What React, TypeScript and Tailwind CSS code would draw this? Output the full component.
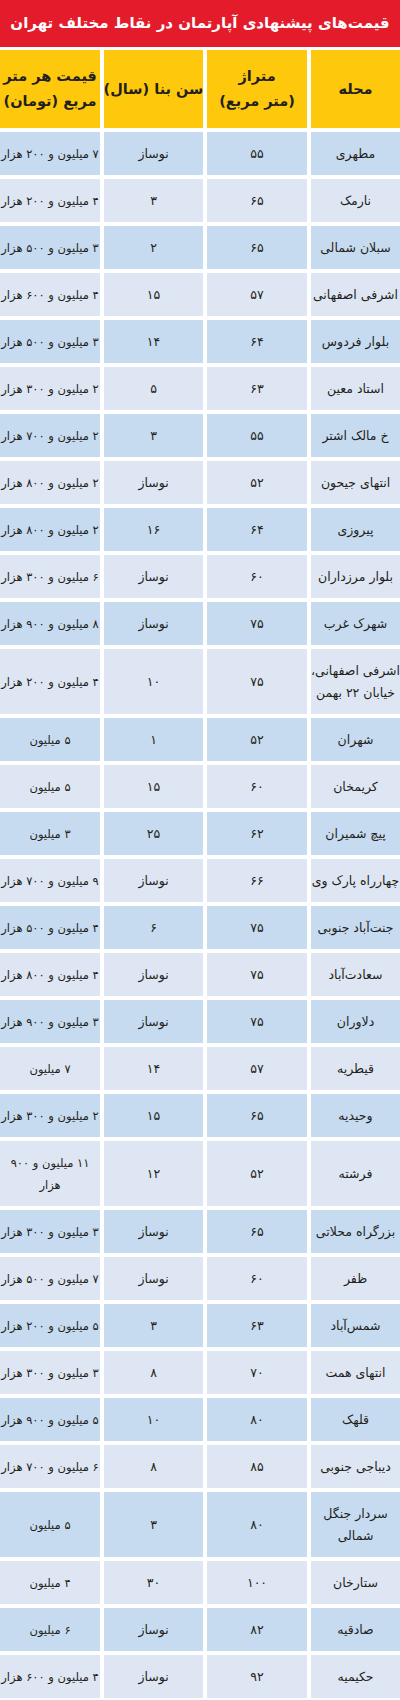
import React from "react";

type Row = {
  name: React.ReactNode;
  area: string;
  age: string;
  price: React.ReactNode;
  tall?: boolean;
};

const rows: Row[] = [
  { name: "مطهری", area: "۵۵", age: "نوساز", price: "۷ میلیون و ۲۰۰ هزار" },
  { name: "نارمک", area: "۶۵", age: "۳", price: "۴ میلیون و ۲۰۰ هزار" },
  { name: "سبلان شمالی", area: "۶۵", age: "۲", price: "۳ میلیون و ۵۰۰ هزار" },
  { name: "اشرفی اصفهانی", area: "۵۷", age: "۱۵", price: "۴ میلیون و ۶۰۰ هزار" },
  { name: "بلوار فردوس", area: "۶۴", age: "۱۴", price: "۳ میلیون و ۵۰۰ هزار" },
  { name: "استاد معین", area: "۶۳", age: "۵", price: "۲ میلیون و ۳۰۰ هزار" },
  { name: "خ مالک اشتر", area: "۵۵", age: "۳", price: "۲ میلیون و ۷۰۰ هزار" },
  { name: "انتهای جیحون", area: "۵۲", age: "نوساز", price: "۲ میلیون و ۸۰۰ هزار" },
  { name: "پیروزی", area: "۶۴", age: "۱۶", price: "۲ میلیون و ۸۰۰ هزار" },
  { name: "بلوار مرزداران", area: "۶۰", age: "نوساز", price: "۶ میلیون و ۳۰۰ هزار" },
  { name: "شهرک غرب", area: "۷۵", age: "نوساز", price: "۸ میلیون و ۹۰۰ هزار" },
  {
    name: (
      <>
        اشرفی اصفهانی،
        <br />
        خیابان ۲۲ بهمن
      </>
    ),
    area: "۷۵",
    age: "۱۰",
    price: "۴ میلیون و ۲۰۰ هزار",
    tall: true,
  },
  { name: "شهران", area: "۵۲", age: "۱", price: "۵ میلیون" },
  { name: "کریمخان", area: "۶۰", age: "۱۵", price: "۵ میلیون" },
  { name: "پیچ شمیران", area: "۶۲", age: "۲۵", price: "۳ میلیون" },
  { name: "چهارراه پارک وی", area: "۶۶", age: "نوساز", price: "۹ میلیون و ۷۰۰ هزار" },
  { name: "جنت‌آباد جنوبی", area: "۷۵", age: "۶", price: "۴ میلیون و ۵۰۰ هزار" },
  { name: "سعادت‌آباد", area: "۷۵", age: "نوساز", price: "۴ میلیون و ۸۰۰ هزار" },
  { name: "دلاوران", area: "۷۵", age: "نوساز", price: "۳ میلیون و ۹۰۰ هزار" },
  { name: "قیطریه", area: "۵۷", age: "۱۴", price: "۷ میلیون" },
  { name: "وحیدیه", area: "۶۵", age: "۱۵", price: "۲ میلیون و ۳۰۰ هزار" },
  {
    name: "فرشته",
    area: "۵۲",
    age: "۱۲",
    price: (
      <>
        ۱۱ میلیون و ۹۰۰
        <br />
        هزار
      </>
    ),
    tall: true,
  },
  { name: "بزرگراه محلاتی", area: "۶۵", age: "نوساز", price: "۳ میلیون و ۳۰۰ هزار" },
  { name: "ظفر", area: "۶۰", age: "نوساز", price: "۷ میلیون و ۵۰۰ هزار" },
  { name: "شمس‌آباد", area: "۶۳", age: "۳", price: "۵ میلیون و ۲۰۰ هزار" },
  { name: "انتهای همت", area: "۷۰", age: "۸", price: "۳ میلیون و ۳۰۰ هزار" },
  { name: "قلهک", area: "۸۰", age: "۱۰", price: "۵ میلیون و ۹۰۰ هزار" },
  { name: "دیباجی جنوبی", area: "۸۵", age: "۸", price: "۶ میلیون و ۷۰۰ هزار" },
  {
    name: (
      <>
        سردار جنگل
        <br />
        شمالی
      </>
    ),
    area: "۸۰",
    age: "۳",
    price: "۵ میلیون",
    tall: true,
  },
  { name: "ستارخان", area: "۱۰۰", age: "۳۰", price: "۴ میلیون" },
  { name: "صادقیه", area: "۸۲", age: "نوساز", price: "۶ میلیون" },
  { name: "حکیمیه", area: "۹۲", age: "نوساز", price: "۴ میلیون و ۶۰۰ هزار" },
];

export default function App() {
  return (
    <div
      dir="rtl"
      className="w-[400px] overflow-hidden bg-white text-[#231f20]"
      style={{ fontFamily: '"DejaVu Sans", sans-serif' }}
    >
      {/* Title */}
      <div className="flex h-[47px] items-center justify-center bg-[#e31b2b] px-2">
        <h1 className="whitespace-nowrap text-[15px] font-bold text-white">
          قیمت‌های پیشنهادی آپارتمان در نقاط مختلف تهران
        </h1>
      </div>

      <div className="mt-[3px] grid grid-cols-[89px_100px_99px_100px] gap-[4px]">
        {/* Header */}
        <HeadCell>محله</HeadCell>
        <HeadCell>
          متراژ
          <br />
          (متر مربع)
        </HeadCell>
        <HeadCell>سن بنا (سال)</HeadCell>
        <HeadCell>
          قیمت هر متر
          <br />
          مربع (تومان)
        </HeadCell>

        {rows.map((r, i) => (
          <TableRow key={i} row={r} dark={i % 2 === 0} />
        ))}
      </div>
    </div>
  );
}

function HeadCell({ children }: { children: React.ReactNode }) {
  return (
    <div className="flex h-[78px] items-center justify-center bg-[#fec90c] text-center text-[14.5px] font-bold leading-[25px]">
      <span className="whitespace-nowrap">{children}</span>
    </div>
  );
}

function TableRow({ row, dark }: { row: Row; dark: boolean }) {
  const bg = dark ? "bg-[#c7dbf0]" : "bg-[#dfe6f3]";
  const h = row.tall ? "h-[65px]" : "h-[43px]";
  const cell = `flex items-center justify-center text-center leading-[22px] ${bg} ${h}`;
  return (
    <>
      <div className={`${cell} text-[12.5px]`}>
        <span className="whitespace-nowrap">{row.name}</span>
      </div>
      <div className={`${cell} text-[12.5px]`}>
        <span className="whitespace-nowrap">{row.area}</span>
      </div>
      <div className={`${cell} text-[12.5px]`}>
        <span className="whitespace-nowrap">{row.age}</span>
      </div>
      <div className={`${cell} text-[11.5px]`}>
        <span className="whitespace-nowrap">{row.price}</span>
      </div>
    </>
  );
}
